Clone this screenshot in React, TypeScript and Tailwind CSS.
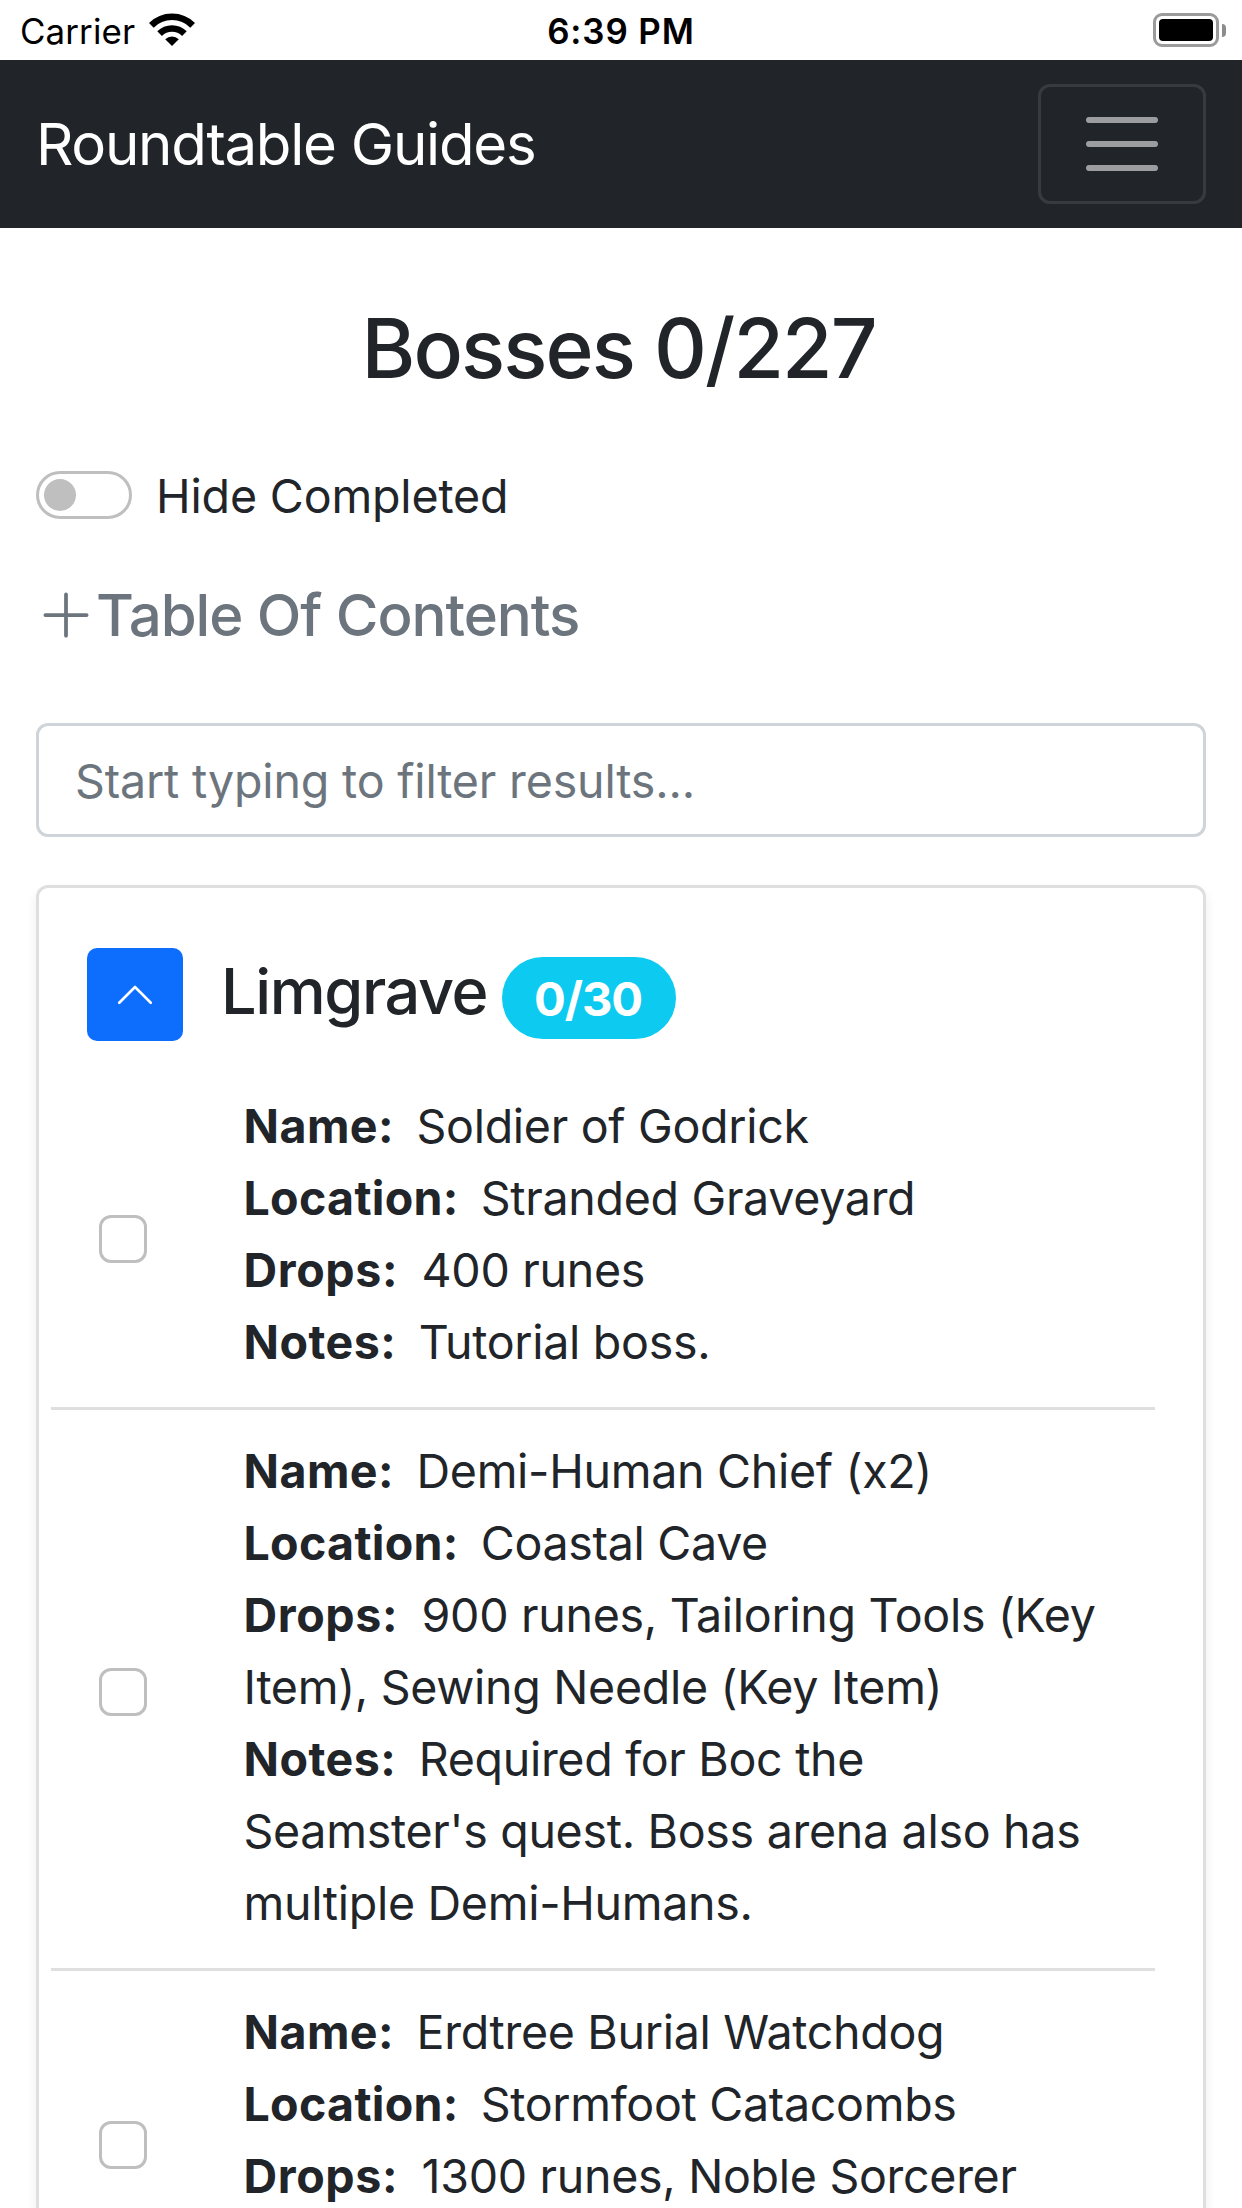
import { useState } from "react";

type Boss = { name: string; location: string; drops: string; notes?: string };

const bosses: Boss[] = [
  {
    name: "Soldier of Godrick",
    location: "Stranded Graveyard",
    drops: "400 runes",
    notes: "Tutorial boss.",
  },
  {
    name: "Demi-Human Chief (x2)",
    location: "Coastal Cave",
    drops: "900 runes, Tailoring Tools (Key Item), Sewing Needle (Key Item)",
    notes:
      "Required for Boc the Seamster's quest. Boss arena also has multiple Demi-Humans.",
  },
  {
    name: "Erdtree Burial Watchdog",
    location: "Stormfoot Catacombs",
    drops: "1300 runes, Noble Sorcerer Ashes",
  },
];

function StatusBar() {
  return (
    <div className="grid h-[60px] grid-cols-3 items-center text-[34.9px] leading-none text-black">
      <div className="flex items-center gap-[14px] pl-[20px]">
        <span className="pt-[2px] tracking-[0.12px]">Carrier</span>
        <svg className="h-[34px] w-[46px]" viewBox="0 0 46 34" fill="none">
          <path d="M2.35 12.35a29.2 29.2 0 0 1 41.3 0" stroke="#000" strokeWidth="6.6" />
          <path d="M10.6 20.6a17.5 17.5 0 0 1 24.8 0" stroke="#000" strokeWidth="6.6" />
          <path d="M23 33 16.2 26.2a9.7 9.7 0 0 1 13.6 0z" fill="#000" />
        </svg>
      </div>
      <div className="pt-[2px] text-center font-semibold tracking-[0.9px]">6:39 PM</div>
      <div className="flex items-center justify-end gap-[3px] pr-[16px]">
        <div className="h-[34px] w-[66px] rounded-[9px] border-[3px] border-[#9b9b9b] p-[3px]">
          <div className="h-full w-full rounded-[4px] bg-black" />
        </div>
        <div className="h-[13px] w-[4px] rounded-r-full bg-[#8c8c8c]" />
      </div>
    </div>
  );
}

function Navbar() {
  return (
    <nav className="flex h-[168px] items-center justify-between bg-[#212529] px-9">
      <a className="text-[58.2px] leading-none tracking-[-1.27px] text-white">Roundtable Guides</a>
      <button
        aria-label="Toggle navigation"
        className="flex h-[120px] w-[168px] flex-col items-center justify-center gap-[18px] rounded-[12px] border-[3px] border-white/10"
      >
        <span className="h-[6px] w-[72px] rounded-full bg-white/55" />
        <span className="h-[6px] w-[72px] rounded-full bg-white/55" />
        <span className="h-[6px] w-[72px] rounded-full bg-white/55" />
      </button>
    </nav>
  );
}

function Field({ label, value }: { label: string; value: string }) {
  return (
    <div>
      <strong
        className={
          label === "Location"
            ? "mr-[22px] font-bold tracking-[0.3px]"
            : label === "Drops"
              ? "mr-[23.5px] font-bold tracking-[0.6px]"
              : "mr-[22.5px] font-bold tracking-[0.45px]"
        }
      >
        {label}:
      </strong>
      {value}
    </div>
  );
}

function BossRow({ boss, last }: { boss: Boss; last: boolean }) {
  return (
    <li
      className={
        last
          ? "flex items-center pt-[25px] pb-[29px]"
          : "flex items-center border-b-[3px] border-[#dfdfdf] pt-[25px] pb-[29px]"
      }
    >
      <input
        type="checkbox"
        aria-label={boss.name}
        className="mt-[6px] mr-[96.5px] ml-[48px] h-[48px] w-[48px] shrink-0 translate-y-[2px] appearance-none rounded-[12px] border-[3px] border-[#bfbfbf] bg-white checked:bg-[#0d6efd]"
      />
      <div className="w-[866px] text-[46.56px] leading-[72px] tracking-[-0.3px]">
        <Field label="Name" value={boss.name} />
        <Field label="Location" value={boss.location} />
        <Field label="Drops" value={boss.drops} />
        {boss.notes && <Field label="Notes" value={boss.notes} />}
      </div>
    </li>
  );
}

export default function App() {
  const [filter, setFilter] = useState("");
  return (
    <div className="h-[2208px] w-[1242px] overflow-hidden bg-white font-['Inter',sans-serif] text-[#212529]">
      <StatusBar />
      <Navbar />
      <main className="px-9">
        <h1 className="mt-[70px] pr-[5px] text-center text-[82px] leading-[102px] font-medium tracking-[-1.91px]">
          Bosses 0/227
        </h1>

        <label className="mt-[71px] flex h-[48px] items-center">
          <span className="flex h-[48px] w-[96px] items-center rounded-full border-[3px] border-[#bfbfbf] pl-[5px]">
            <span className="h-[32px] w-[32px] rounded-full bg-[#bfbfbf]" />
          </span>
          <span className="ml-[24px] pt-[2px] text-[46.56px] leading-[48px] tracking-[-0.16px]">
            Hide Completed
          </span>
        </label>

        <h4 className="mt-[66px] flex h-[60px] items-center text-[58.2px] leading-[60px] font-medium tracking-[-1.05px] text-[#6c757d]">
          <svg className="h-[60px] w-[60px]" viewBox="0 0 16 16" fill="none" stroke="currentColor" strokeLinecap="round">
            <path d="M8 2.5v11M2.5 8h11" />
          </svg>
          Table Of Contents
        </h4>

        <input
          value={filter}
          onChange={(e) => setFilter(e.target.value)}
          placeholder="Start typing to filter results..."
          className="mt-[78px] block h-[114px] w-full rounded-[12px] border-[3px] border-[#ced4da] px-[36px] pt-[2px] text-[46.56px] tracking-[-0.17px] placeholder:text-[#6c757d] placeholder:opacity-100"
        />

        <section className="mt-[48px] rounded-[12px] border-[3px] border-[#dfdfdf] bg-white pt-[60px] shadow-[0_6px_12px_rgba(0,0,0,0.075)]">
          <div className="flex h-[93px] items-center pl-[48px]">
            <button
              aria-label="Collapse"
              className="flex h-[93px] w-[96px] items-center justify-center rounded-[10px] bg-[#0d6efd] text-white"
            >
              <svg className="h-[42px] w-[42px]" viewBox="0 0 16 16" fill="none" stroke="currentColor" strokeLinecap="round" strokeLinejoin="round">
                <path d="M2 10.95 8 4.95l6 6" />
              </svg>
            </button>
            <h4 className="w-[265px] ml-[38px] pb-[7px] text-[63px] leading-[78px] font-medium tracking-[-1.4px]">
              Limgrave
            </h4>
            <span className="mt-[7px] ml-[16px] flex h-[82px] w-[174px] items-center justify-center rounded-full bg-[#0dcaf0] pt-[2px] pr-[2px] text-[47.2px] leading-none font-bold tracking-[-1.1px] text-white">
              0/30
            </span>
          </div>
          <ul className="mt-[24px] ml-[12px] w-[1104px]">
            {bosses.map((boss, i) => (
              <BossRow key={boss.name} boss={boss} last={i === bosses.length - 1} />
            ))}
          </ul>
        </section>
      </main>
    </div>
  );
}
